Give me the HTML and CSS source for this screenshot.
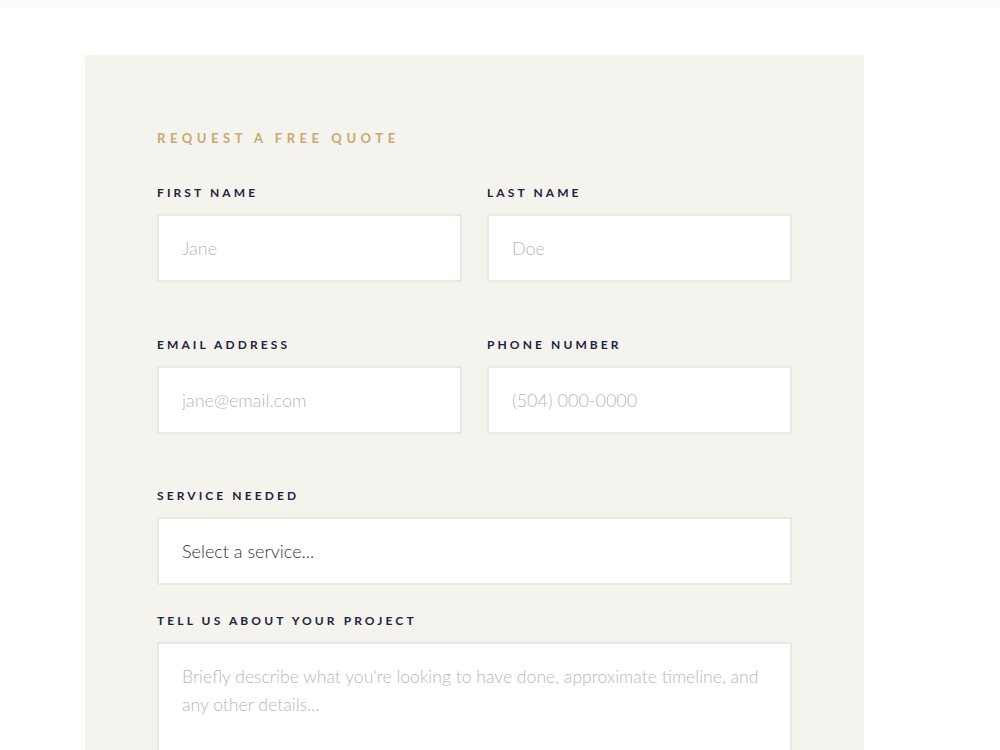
FILE: index.html
```html
<!DOCTYPE html>
<html lang="en">
<head>
<meta charset="utf-8">
<title>Request a Free Quote</title>
<link rel="stylesheet" href="styles.css">
</head>
<body>
<div class="topbar"></div>
<main class="page">
  <section class="quote-panel">
    <p class="eyebrow">Request a Free Quote</p>
    <form class="quote-form">
      <div class="row">
        <label class="field">
          <span class="label">First Name</span>
          <input class="control" type="text" placeholder="Jane">
        </label>
        <label class="field">
          <span class="label">Last Name</span>
          <input class="control" type="text" placeholder="Doe">
        </label>
      </div>
      <div class="row">
        <label class="field">
          <span class="label">Email Address</span>
          <input class="control" type="email" placeholder="jane@email.com">
        </label>
        <label class="field">
          <span class="label">Phone Number</span>
          <input class="control" type="tel" placeholder="(504) 000-0000">
        </label>
      </div>
      <label class="field field-select">
        <span class="label">Service Needed</span>
        <div class="control select">Select a service...</div>
      </label>
      <label class="field">
        <span class="label">Tell Us About Your Project</span>
        <textarea class="control textarea" placeholder="Briefly describe what you're looking to have done, approximate timeline, and any other details..."></textarea>
      </label>
    </form>
  </section>
</main>
</body>
</html>
```

FILE: styles.css
```css
* {
  box-sizing: border-box;
}

html, body {
  margin: 0;
  padding: 0;
  background: #ffffff;
  overflow: hidden;
  height: 750px;
}

body {
  font-family: "Lato", "Noto Sans", sans-serif;
}

.topbar {
  height: 7px;
  background: #fbfbfb;
}

.page {
  padding: 48px 0 0 85px;
}

.quote-panel {
  width: 779px;
  background: #f4f3ee;
  padding: 72px 72px 80px;
  min-height: 760px;
}

.eyebrow {
  margin: 0 0 35px;
  font-size: 13px;
  line-height: 22px;
  font-weight: 700;
  letter-spacing: 4.55px;
  text-transform: uppercase;
  color: #c9a971;
}

.quote-form {
  display: flex;
  flex-direction: column;
}

.row {
  display: grid;
  grid-template-columns: 1fr 1fr;
  column-gap: 25px;
  margin-bottom: 54px;
}

.row + .row {
  margin-bottom: 53px;
}

.field {
  display: flex;
  flex-direction: column;
}

.field-select {
  margin-bottom: 27px;
}

.label {
  font-size: 12px;
  line-height: 18px;
  font-weight: 700;
  letter-spacing: 3.1px;
  text-transform: uppercase;
  color: #1e2340;
  margin-bottom: 12px;
}

.control {
  display: block;
  width: 100%;
  height: 68px;
  border: 2px solid #ebe8e1;
  background: #ffffff;
  padding: 0 23px;
  font-family: "Lato", "Noto Sans", sans-serif;
  font-size: 18px;
  font-weight: 300;
  color: #333333;
  outline: none;
  border-radius: 0;
}

.control::placeholder {
  color: #b8b8b8;
  font-weight: 300;
}

.select {
  display: flex;
  align-items: center;
  color: #333333;
}

.textarea {
  height: 160px;
  padding: 19px 16px 19px 23px;
  font-size: 17.6px;
  line-height: 28px;
  resize: none;
}
```
